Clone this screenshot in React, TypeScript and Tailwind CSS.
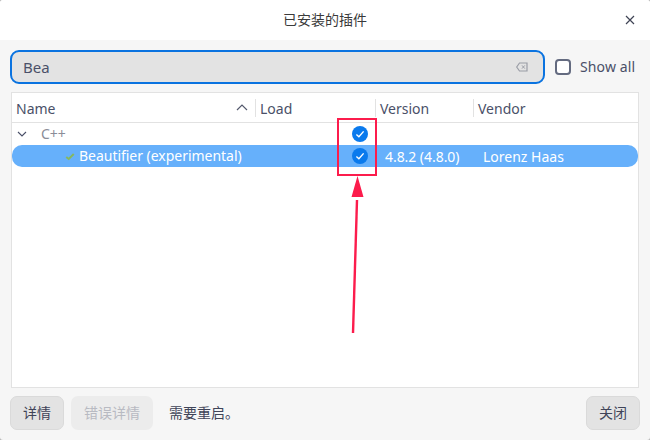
const font = { fontFamily: '"Noto Sans", "Noto Sans CJK SC", sans-serif' };

function Check({ className }: { className: string }) {
  return (
    <svg width="16" height="16" viewBox="0 0 16 16" className={className}>
      <circle cx="8" cy="8" r="8" fill="#0a7aed" />
      <path d="M4.4 8.4 L6.9 10.8 L11.6 5.4" fill="none" stroke="#fff" strokeWidth="1.4" />
    </svg>
  );
}

function Head({ w, label, children, first }: { w: string; label: string; children?: React.ReactNode; first?: boolean }) {
  return (
    <div className={`${w} flex items-center justify-between h-[18px] ${first ? "" : "border-l border-[#e2e2e2]"} pl-1 pr-[4px] shrink-0`}>
      <span className="relative top-px">{label}</span>
      {children}
    </div>
  );
}

export default function App() {
  return (
    <div className="w-[650px] h-[440px] bg-[#b5b5b5]">
      <div className="relative w-[650px] h-[440px] overflow-hidden rounded-[3px] bg-[#f6f6f6] text-[14px] text-[#4a5068] leading-none" style={font}>
        <header className="h-10 bg-white flex items-center justify-center relative text-[#3a3a3a]">
          <span>已安装的插件</span>
          <svg width="10" height="10" viewBox="0 0 10 10" className="absolute left-[625px] top-[15px]">
            <path d="M1 1 L9 9 M9 1 L1 9" stroke="#3f4455" strokeWidth="1.2" fill="none" />
          </svg>
        </header>

        <div className="mt-[10px] mb-2 pl-[10px] flex items-center gap-[10px] h-[34px]">
          <div className="w-[535px] h-[34px] rounded-[9px] border-2 border-[#0a73e0] bg-[#e3e3e3] flex items-center justify-between pl-[11px] pr-[15px] text-[15px]">
            <span>Bea</span>
            <svg width="12" height="10" viewBox="0 0 12 10">
              <path d="M3.5 1 H11 V9 H3.5 L0.7 5 Z" fill="none" stroke="#9a9da6" strokeWidth="1.2" />
              <path d="M6 3.4 L8.8 6.6 M8.8 3.4 L6 6.6" stroke="#9a9da6" strokeWidth="1" />
            </svg>
          </div>
          <div className="flex items-center gap-[9px]">
            <span className="w-4 h-4 rounded-[4px] border-2 border-[#646b80] bg-white" />
            <span className="tracking-[0.12px]">Show all</span>
          </div>
        </div>

        <div className="mx-[11px] w-[628px] h-[296px] bg-white border border-[#e2e2e2] flex flex-col">
          <div className="h-[30px] border-b border-[#e2e2e2] flex items-center text-[14px] shrink-0">
            <Head w="w-[243px]" label="Name" first>
              <svg width="12" height="7" viewBox="0 0 12 7" className="mr-[3px]">
                <path d="M1 6 L6 1 L11 6" fill="none" stroke="#555a6e" strokeWidth="1.2" />
              </svg>
            </Head>
            <Head w="w-[120px]" label="Load" />
            <Head w="w-[98px]" label="Version" />
            <Head w="w-[100px]" label="Vendor" />
          </div>
          <div className="h-[22px] flex items-center relative text-[14px] text-[#8a8d98]">
            <svg width="10" height="6" viewBox="0 0 10 6" className="ml-[5px]">
              <path d="M1 1 L5 5 L9 1" fill="none" stroke="#4a5068" strokeWidth="1.1" />
            </svg>
            <span className="ml-[14px]">C++</span>
            <Check className="absolute left-[340px] top-[3px]" />
          </div>
          <div className="h-[22px] rounded-[10px] bg-[#66b0fb] flex items-center relative text-white text-[14px]">
            <svg width="10" height="9" viewBox="0 0 12 10" className="ml-[53px]">
              <path d="M1.5 5.5 L4.5 8 L10.5 2" fill="none" stroke="#86b860" strokeWidth="2.4" />
            </svg>
            <span className="ml-[4px] tracking-[-0.03px]">Beautifier (experimental)</span>
            <Check className="absolute left-[340px] top-[3px]" />
            <span className="absolute left-[373px] top-[5px] tracking-[-0.05px]">4.8.2 (4.8.0)</span>
            <span className="absolute left-[471px] top-[5px]">Lorenz Haas</span>
          </div>
        </div>

        <footer className="flex items-center px-[10px] h-[34px] mt-2 text-[#3f4458]">
          <button className="w-[54px] h-[34px] rounded-[7px] bg-[#e3e3e3] border border-[#dadada]">详情</button>
          <button className="w-[82px] h-[34px] rounded-[7px] bg-[#ececec] text-[#b8bac2] ml-[7px]">错误详情</button>
          <span className="ml-4">需要重启。</span>
          <button className="w-[54px] h-[34px] rounded-[7px] bg-[#e3e3e3] border border-[#dadada] ml-auto">关闭</button>
        </footer>

        <div className="absolute left-[337px] top-[118px] w-[40px] h-[58px] border-[2px] border-[#fc1c4c]" />
        <svg width="30" height="160" viewBox="0 0 30 160" className="absolute left-[340px] top-[176px]">
          <path d="M13 157 L17 24" stroke="#fc1c4c" strokeWidth="2.4" fill="none" />
          <path d="M17.5 0 L23.5 21 L11.5 21 Z" fill="#fc1c4c" />
        </svg>
      </div>
    </div>
  );
}
